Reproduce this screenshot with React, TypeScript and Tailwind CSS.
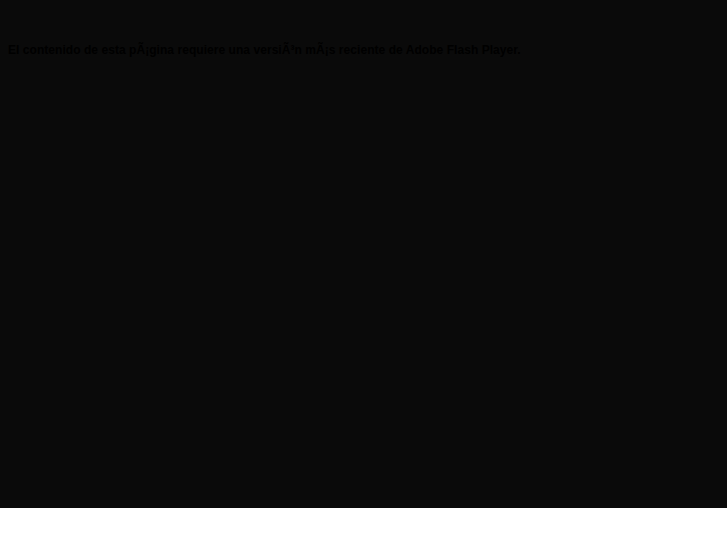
export default function App() {
  return (
    <div className="w-full bg-white">
      <div className="h-[508px] w-full bg-[#0a0a0a] pt-[43px] px-[8px]">
        <p className="text-[12px] leading-[14px] font-bold tracking-[0.05px] text-black" style={{ fontFamily: '"Liberation Sans", Arial, sans-serif' }}>
          El contenido de esta pÃ¡gina requiere una versiÃ³n mÃ¡s reciente de Adobe Flash Player.
        </p>
      </div>
    </div>
  );
}
